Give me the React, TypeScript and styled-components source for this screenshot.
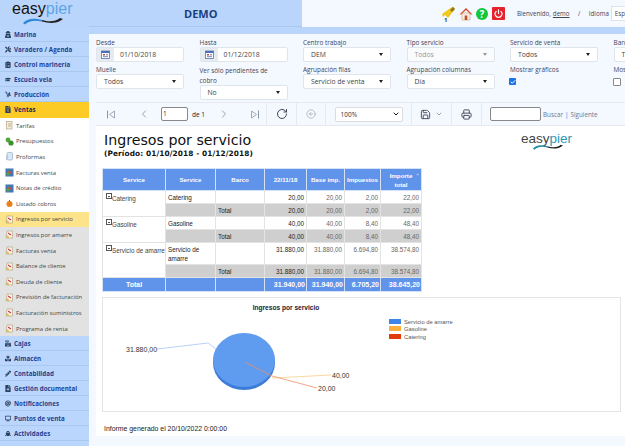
import React from "react";
import styled, { createGlobalStyle } from "styled-components";
import { ChevronLeft, ChevronRight, RotateCw, ArrowLeftCircle, Save, ChevronDown, Printer, Power, Check } from "lucide-react";
import {
  FaUserSecret,
  FaTools,
  FaClipboardList,
  FaGraduationCap,
  FaDolly,
  FaFileInvoiceDollar,
  FaCashRegister,
  FaBoxes,
  FaPencilAlt,
  FaFileAlt,
  FaAt,
  FaDesktop,
  FaShip,
} from "react-icons/fa";

const GlobalStyle = createGlobalStyle`
  html, body {
    margin: 0;
    padding: 0;
    width: 625px;
    height: 446px;
    overflow: hidden;
    background: #f4f8ff;
    font-family: "Open Sans", "Liberation Sans", sans-serif;
  }
`;

const Page = styled.div`
  width: 625px;
  height: 446px;
  display: flex;
  overflow: hidden;
`;

const Sidebar = styled.div`
  width: 89px;
  flex: none;
  display: flex;
  flex-direction: column;
  overflow: hidden;
  height: 446px;
  background: #fff;
`;

const LogoBox = styled.div`
  height: 27px;
  flex: none;
  background: #b9d5fb;
  position: relative;
`;

const LogoText = styled.div`
  font-family: "Liberation Sans", sans-serif;
  font-size: 16px;
  line-height: 18px;
  color: #111;
  padding-left: 12px;
`;

const LogoLight = styled.span<{ $tone?: string }>`
  color: ${(p) => p.$tone || "#5aa5e8"};
`;

const Swoosh = styled.div`
  position: absolute;
  left: 22px;
  top: 17px;
`;

const Heading = styled.div<{ $active?: boolean }>`
  height: 15px;
  flex: none;
  box-sizing: border-box;
  padding-left: 5px;
  display: flex;
  align-items: center;
  gap: 3px;
  font-size: 6.2px;
  font-weight: 700;
  letter-spacing: 0.05px;
  white-space: nowrap;
  color: ${(p) => (p.$active ? "#1c2a50" : "#1f3f8f")};
  background: ${(p) => (p.$active ? "#fccb25" : "#bad6fc")};
  border-bottom: 1px solid ${(p) => (p.$active ? "#fccb25" : "#a9c8ef")};
  svg {
    width: 6px;
    height: 7px;
    flex: none;
    color: #2a3f5f;
  }
`;

const VentasHeading = styled(Heading)`
  height: 16px;
`;

const SubItem = styled.div<{ $tone?: "plain" | "grey" | "current" }>`
  height: 15.6px;
  flex: none;
  padding-left: 5px;
  display: flex;
  align-items: center;
  gap: 2px;
  font-size: 5.9px;
  white-space: nowrap;
  color: #444;
  background: ${(p) =>
    p.$tone === "current" ? "#fde38a" : p.$tone === "grey" ? "#e2e2e2" : "#fff"};
`;

const Main = styled.div`
  flex: 1;
  min-width: 0;
  display: flex;
  flex-direction: column;
`;

const TopBar = styled.div`
  height: 27px;
  flex: none;
  display: flex;
`;

const TitleBlock = styled.div`
  width: 213px;
  flex: none;
  background: #b9d5fb;
  border-bottom: 1px solid #a9c8ef;
  box-sizing: border-box;
  display: flex;
  align-items: center;
  padding-left: 95px;
  font-size: 11px;
  font-weight: 700;
  color: #1a3f80;
`;

const UserBlock = styled.div`
  flex: 1;
  background: #f4f8ff;
  display: flex;
  align-items: center;
  padding-left: 139px;
  font-size: 6.2px;
  color: #445;
  white-space: nowrap;
`;

const TopIcon = styled.span`
  display: flex;
  margin-right: 3px;
`;

const HelpBadge = styled.span`
  width: 12px;
  height: 12px;
  border-radius: 50%;
  background: #10c83a;
  color: #fff;
  font-size: 10px;
  font-weight: 700;
  display: flex;
  align-items: center;
  justify-content: center;
  margin-right: 4px;
`;

const PowerBadge = styled.span`
  width: 13px;
  height: 13px;
  background: #e8222c;
  color: #fff;
  border-radius: 1px;
  display: flex;
  align-items: center;
  justify-content: center;
  margin-right: 12px;
`;

const UserName = styled.span`
  text-decoration: underline;
  margin-left: 2px;
`;

const Slash = styled.span`
  margin: 0 8.5px;
`;

const LangBox = styled.span`
  margin-left: 2px;
  background: #fff;
  border: 1px solid #dde3ea;
  padding: 2px 3px;
  width: 30px;
`;

const Band = styled.div`
  height: 7px;
  flex: none;
  background: #b9d5fb;
`;

const Filters = styled.div`
  height: 68px;
  flex: none;
  padding: 5px 0 0 7px;
  box-sizing: border-box;
  overflow: hidden;
  display: grid;
  grid-template-columns: repeat(6, 88px);
  grid-auto-rows: min-content;
  column-gap: 15.5px;
  row-gap: 4px;
  width: 640px;
`;

const Field = styled.div`
  display: flex;
  flex-direction: column;
  width: 88px;
  font-size: 6.4px;
  color: #445;
`;

const FieldLabel = styled.label`
  line-height: 8px;
  white-space: nowrap;
`;

const WrapLabel = styled(FieldLabel)`
  white-space: normal;
  width: 74px;
  line-height: 10px;
  margin-bottom: -1px;
`;

const Control = styled.div<{ $disabled?: boolean }>`
  height: 15px;
  box-sizing: border-box;
  background: ${(p) => (p.$disabled ? "#fafbfd" : "#fff")};
  border: 1px solid #dfe5ec;
  border-radius: 2px;
  display: flex;
  align-items: center;
  justify-content: space-between;
  padding: 0 7px;
  font-size: 6.8px;
  white-space: nowrap;
  color: ${(p) => (p.$disabled ? "#999" : "#444")};
`;

const Caret = styled.span<{ $disabled?: boolean }>`
  width: 0;
  height: 0;
  flex: none;
  border-left: 2.5px solid transparent;
  border-right: 2.5px solid transparent;
  border-top: 3px solid ${(p) => (p.$disabled ? "#999" : "#222")};
`;

const DateControl = styled(Control)`
  justify-content: flex-start;
  padding: 0;
`;

const DateAddon = styled.span`
  width: 17px;
  height: 100%;
  background: #e7ebf0;
  display: flex;
  align-items: center;
  justify-content: center;
  margin-right: 6px;
`;

const CheckOn = styled.span`
  width: 7px;
  height: 7px;
  margin: 4px 0 0 -1px;
  background: #1a73e8;
  border-radius: 1px;
  color: #fff;
  display: flex;
  align-items: center;
  justify-content: center;
`;

const CheckOff = styled.span`
  width: 6px;
  height: 6px;
  margin: 4px 0 0 -1px;
  background: #fff;
  border: 1px solid #888;
  border-radius: 1px;
`;

const Toolbar = styled.div`
  height: 24px;
  flex: none;
  margin-left: 7px;
  display: flex;
  align-items: stretch;
  border-top: 1px solid #e6eaf0;
  border-bottom: 1px solid #e6eaf0;
  box-sizing: border-box;
  color: #778;
`;

const ToolGroup = styled.div<{ $width: number }>`
  width: ${(p) => p.$width}px;
  flex: none;
  box-sizing: border-box;
  border-right: 1px solid #e6eaf0;
  display: flex;
  align-items: center;
  justify-content: center;
  gap: 4px;
  font-size: 6.3px;
`;

const PagerGroup = styled(ToolGroup)`
  justify-content: flex-start;
  padding-left: 11px;
  gap: 0;
`;

const SearchGroup = styled(ToolGroup)`
  justify-content: flex-start;
  padding-left: 8px;
  gap: 2px;
  border-right: none;
`;

const PagerStep = styled.span<{ $gap: number }>`
  display: flex;
  margin-right: ${(p) => p.$gap}px;
`;

const PageInput = styled.span`
  width: 27px;
  height: 14px;
  box-sizing: border-box;
  border: 1px solid #888;
  border-radius: 2px;
  background: #fff;
  font-size: 6.5px;
  color: #333;
  padding-left: 1px;
  line-height: 12px;
  margin-right: 4px;
`;

const PagerText = styled.span`
  color: #222;
  margin-right: 13px;
  font-size: 6.5px;
`;

const ZoomBox = styled.div`
  width: 68px;
  height: 15px;
  box-sizing: border-box;
  background: #fff;
  border: 1px solid #ddd;
  border-radius: 2px;
  display: flex;
  align-items: center;
  justify-content: space-between;
  padding: 0 2px 0 5px;
  color: #333;
  font-size: 6.5px;
`;

const SearchInput = styled.span`
  width: 51px;
  height: 14px;
  box-sizing: border-box;
  background: #fff;
  border: 1px solid #888;
  border-radius: 2px;
`;

const SearchLinks = styled.span`
  color: #6a7a90;
  white-space: nowrap;
`;

const Sep = styled.span`
  color: #1a73e8;
  margin: 0 2px;
`;

const Report = styled.div`
  flex: 1;
  min-height: 0;
  background: #fff;
  margin: 0 0 10px 7px;
  padding: 5px 0 0 6px;
  display: flex;
  flex-direction: column;
  font-family: "Liberation Sans", sans-serif;
  overflow: hidden;
`;

const ReportHead = styled.div`
  display: flex;
  justify-content: space-between;
  height: 37px;
  flex: none;
`;

const TitleGroup = styled.div`
  margin-left: 2px;
`;

const ReportTitle = styled.div`
  font-family: "DejaVu Sans", sans-serif;
  font-size: 14.2px;
  line-height: 18px;
  color: #111;
`;

const Period = styled.div`
  font-family: "DejaVu Sans", sans-serif;
  font-size: 7.4px;
  font-weight: 700;
  line-height: 10px;
  letter-spacing: 0.1px;
  color: #111;
`;

const ReportLogo = styled.div`
  width: 54px;
  margin-right: 50px;
  position: relative;
  font-size: 13.5px;
  line-height: 15px;
  color: #444;
  white-space: nowrap;
`;

const ReportSwoosh = styled.div`
  position: absolute;
  left: 9px;
  top: 13px;
`;

const Table = styled.table`
  width: 319px;
  border-collapse: collapse;
  table-layout: fixed;
  font-size: 6.3px;
  color: #444;
  flex: none;
`;

const HeadCell = styled.th`
  background: #6093ea;
  color: #fff;
  font-size: 6.2px;
  font-weight: 700;
  height: 21px;
  padding: 0 1px;
  border: 1px solid #d5e2f5;
  line-height: 9px;
  position: relative;
`;

const Cell = styled.td<{ $num?: boolean; $grey?: boolean; $dark?: boolean; $group?: boolean }>`
  padding: 2px 2px 1px 2px;
  vertical-align: top;
  line-height: 9px;
  border: 1px solid #e3e3e3;
  border-top-color: ${(p) => (p.$group ? "#999" : "#e3e3e3")};
  text-align: ${(p) => (p.$num ? "right" : "left")};
  background: ${(p) => (p.$grey ? "#cfcfcf" : "#fff")};
  color: ${(p) => (p.$dark ? "#222" : "#666")};
`;

const NameCell = styled(Cell)`
  white-space: nowrap;
  color: #444;
`;

const TotalCell = styled.td<{ $num?: boolean }>`
  background: #6093ea;
  color: #fff;
  font-weight: 700;
  font-size: 7px;
  height: 13px;
  padding: 0 1px;
  white-space: nowrap;
  border: 1px solid #d5e2f5;
  text-align: ${(p) => (p.$num ? "right" : "center")};
`;

const Toggle = styled.span`
  display: inline-block;
  width: 4px;
  height: 4px;
  border: 1px solid #555;
  margin: 0 0 0 1px;
  vertical-align: 2px;
  position: relative;
  &::after {
    content: "";
    position: absolute;
    left: 1px;
    right: 1px;
    top: 1.5px;
    height: 1px;
    background: #555;
  }
`;

const ChartBox = styled.div`
  width: 519px;
  height: 115px;
  flex: none;
  margin-top: 5px;
  border: 1px solid #e5e5e5;
  box-sizing: border-box;
`;

const ChartSvg = styled.svg`
  display: block;
`;

const Generated = styled.div`
  font-size: 6.9px;
  line-height: 9px;
  color: #222;
  margin: 12px 0 0 2px;
`;

const Sort = styled.span`
  position: absolute;
  right: 2px;
  top: 1px;
  font-size: 5px;
  color: #dde;
`;

type GlyphKind = "report" | "tariff" | "money" | "page" | "invoice" | "coin";

function SubGlyph({ kind }: { kind: GlyphKind }) {
  return (
    <svg width="9" height="9" viewBox="0 0 9 9" style={{ flex: "none" }}>
      {kind === "report" && (
        <>
          <path d="M2 1 H7.5 V8 H1 Z" fill="#f8f4e6" stroke="#a89c78" strokeWidth="0.6" />
          <path d="M3 3 L6 5" stroke="#d8304a" strokeWidth="1.2" />
          <path d="M1 7 L3 5 L4 8 Z" fill="#e8b020" />
        </>
      )}
      {kind === "tariff" && (
        <>
          <rect x="1.5" y="0.5" width="5.5" height="7.5" fill="#f3ecd8" stroke="#a89c78" strokeWidth="0.6" />
          <path d="M3 3 H6 M3 5 H6" stroke="#b09a70" strokeWidth="0.7" />
        </>
      )}
      {kind === "money" && (
        <>
          <circle cx="3" cy="3" r="2.4" fill="#4fa83a" />
          <circle cx="6" cy="6" r="2.6" fill="#3c8f2c" />
        </>
      )}
      {kind === "page" && (
        <>
          <rect x="2" y="0.5" width="5.5" height="7.5" rx="1" fill="#dbe6f5" stroke="#8ca2c4" strokeWidth="0.6" />
          <path d="M1 3 H3 V8 H1 Z" fill="#b8cae4" />
        </>
      )}
      {kind === "invoice" && (
        <>
          <rect x="0.5" y="0.5" width="8" height="8" fill="#3f7ab0" />
          <path d="M2 7 L4 2 L7 5 Z" fill="#d84a3a" />
          <rect x="1.5" y="4.5" width="3" height="3" fill="#5a9a5a" />
        </>
      )}
      {kind === "coin" && (
        <>
          <circle cx="4.5" cy="5" r="3" fill="#ee7f16" />
          <rect x="4" y="1" width="1" height="1.5" fill="#a85a10" />
        </>
      )}
    </svg>
  );
}

function PagerEdge({ flip }: { flip?: boolean }) {
  return (
    <svg width="8" height="9" viewBox="0 0 8 9" style={{ transform: flip ? "scaleX(-1)" : undefined }}>
      <path d="M0.5 0.5 V8.5" stroke="#8a94a6" strokeWidth="1" />
      <path d="M7.5 1 L2.5 4.5 L7.5 8 Z" fill="none" stroke="#8a94a6" strokeWidth="0.8" />
    </svg>
  );
}

function CalendarGlyph() {
  return (
    <svg width="9" height="9" viewBox="0 0 9 9">
      <rect x="0.5" y="1" width="8" height="7.5" fill="#fff" stroke="#5577b0" strokeWidth="0.8" />
      <rect x="0.5" y="1" width="8" height="2" fill="#4a70b8" />
      <rect x="2" y="4" width="2" height="1.5" fill="#c05050" />
      <rect x="5" y="4" width="2" height="1.5" fill="#88a0c8" />
      <rect x="2" y="6" width="5" height="1.2" fill="#88a0c8" />
    </svg>
  );
}

function LogoSwoosh({ width, height, tone }: { width: number; height: number; tone: string }) {
  return (
    <svg width={width} height={height} viewBox="0 0 42 8" style={{ display: "block" }}>
      <path d="M1 6 C6 1 12 1 20 3 L20 4.5 C13 3 7 3.5 3 7.5 Z" fill={tone} />
      <path d="M20 3 C27 5 33 5 38 1 L41 2 L38 4 C32 7 26 6 20 4.5 Z" fill="#222" />
    </svg>
  );
}

const upper: [React.ElementType, string][] = [
  [FaUserSecret, "Marina"],
  [FaTools, "Varadero / Agenda"],
  [FaClipboardList, "Control marinería"],
  [FaGraduationCap, "Escuela vela"],
  [FaDolly, "Producción"],
];

const ventas: [string, GlyphKind][] = [
  ["Tarifas", "tariff"],
  ["Presupuestos", "money"],
  ["Proformas", "page"],
  ["Facturas venta", "invoice"],
  ["Notas de crédito", "invoice"],
  ["Listado cobros", "coin"],
];

const informes = [
  "Ingresos por amarre",
  "Facturas venta",
  "Balance de cliente",
  "Deuda de cliente",
  "Previsión de facturación",
  "Facturación suministros",
  "Programa de renta",
];

const lower: [React.ElementType, string][] = [
  [FaCashRegister, "Cajas"],
  [FaBoxes, "Almacén"],
  [FaPencilAlt, "Contabilidad"],
  [FaFileAlt, "Gestión documental"],
  [FaAt, "Notificaciones"],
  [FaDesktop, "Puntos de venta"],
  [FaShip, "Actividades"],
];

const rows = [
  { name: "Catering", sub: "Catering", v: ["20,00", "20,00", "2,00", "22,00"] },
  { name: "Gasoline", sub: "Gasoline", v: ["40,00", "40,00", "8,40", "48,40"] },
  { name: "Servicio de amarre", sub: "Servicio de amarre", v: ["31.880,00", "31.880,00", "6.694,80", "38.574,80"] },
];

function App() {
  return (
    <Page>
      <GlobalStyle />
      <Sidebar>
        <LogoBox>
          <LogoText>
            easy<LogoLight>pier</LogoLight>
          </LogoText>
          <Swoosh>
            <LogoSwoosh width={42} height={8} tone="#2f86d8" />
          </Swoosh>
        </LogoBox>
        {upper.map(([Icon, label]) => (
          <Heading key={label}>
            <Icon />
            {label}
          </Heading>
        ))}
        <VentasHeading $active>
          <FaFileInvoiceDollar />
          Ventas
        </VentasHeading>
        {ventas.map(([label, kind]) => (
          <SubItem key={label}>
            <SubGlyph kind={kind} />
            {label}
          </SubItem>
        ))}
        <SubItem $tone="current">
          <SubGlyph kind="report" />
          Ingresos por servicio
        </SubItem>
        {informes.map((label) => (
          <SubItem key={label} $tone="grey">
            <SubGlyph kind="report" />
            {label}
          </SubItem>
        ))}
        {lower.map(([Icon, label]) => (
          <Heading key={label}>
            <Icon />
            {label}
          </Heading>
        ))}
        <Heading />
      </Sidebar>
      <Main>
        <TopBar>
          <TitleBlock>DEMO</TitleBlock>
          <UserBlock>
            <TopIcon>
              <svg width="15" height="16" viewBox="0 0 15 16">
                <path d="M1 8 L8 3 L12 0.5 L14 3 L11 7 L7 12 L4 9 L2 11 Z" fill="#f2c81e" />
                <path d="M9 4 L12 1 L14 3 L11 6 Z" fill="#8a7a20" />
                <text x="3" y="15.5" fontSize="6" fontWeight="700" fill="#345">1</text>
              </svg>
            </TopIcon>
            <TopIcon>
              <svg width="14" height="14" viewBox="0 0 14 14">
                <path d="M3 6 H11 V13 H3 Z" fill="#fbeee0" stroke="#c8a080" strokeWidth="0.6" />
                <path d="M0.5 7.5 L7 1 L13.5 7.5 L12 7.5 L7 3 L2 7.5 Z" fill="#cf4a28" />
                <rect x="5.7" y="8.5" width="2.6" height="4.5" fill="#b8502e" />
              </svg>
            </TopIcon>
            <HelpBadge>?</HelpBadge>
            <PowerBadge>
              <Power size={9} strokeWidth={3} />
            </PowerBadge>
            Bienvenido,
            <UserName>demo</UserName>
            <Slash>/</Slash>
            Idioma
            <LangBox>Esp</LangBox>
          </UserBlock>
        </TopBar>
        <Band />
        <Filters>
          <Field>
            <FieldLabel>Desde</FieldLabel>
            <DateControl>
              <DateAddon>
                <CalendarGlyph />
              </DateAddon>
              01/10/2018
            </DateControl>
          </Field>
          <Field>
            <FieldLabel>Hasta</FieldLabel>
            <DateControl>
              <DateAddon>
                <CalendarGlyph />
              </DateAddon>
              01/12/2018
            </DateControl>
          </Field>
          <Field>
            <FieldLabel>Centro trabajo</FieldLabel>
            <Control>
              DEM
              <Caret />
            </Control>
          </Field>
          <Field>
            <FieldLabel>Tipo servicio</FieldLabel>
            <Control $disabled>
              Todos
              <Caret $disabled />
            </Control>
          </Field>
          <Field>
            <FieldLabel>Servicio de venta</FieldLabel>
            <Control>
              Todos
              <Caret />
            </Control>
          </Field>
          <Field>
            <FieldLabel>Barco</FieldLabel>
            <Control>
              Todos
              <Caret />
            </Control>
          </Field>
          <Field>
            <FieldLabel>Muelle</FieldLabel>
            <Control>
              Todos
              <Caret />
            </Control>
          </Field>
          <Field>
            <WrapLabel>Ver sólo pendientes de cobro</WrapLabel>
            <Control>
              No
              <Caret />
            </Control>
          </Field>
          <Field>
            <FieldLabel>Agrupación filas</FieldLabel>
            <Control>
              Servicio de venta
              <Caret />
            </Control>
          </Field>
          <Field>
            <FieldLabel>Agrupación columnas</FieldLabel>
            <Control>
              Día
              <Caret />
            </Control>
          </Field>
          <Field>
            <FieldLabel>Mostrar gráficos</FieldLabel>
            <CheckOn>
              <Check size={6} strokeWidth={4} />
            </CheckOn>
          </Field>
          <Field>
            <FieldLabel>Mostrar</FieldLabel>
            <CheckOff />
          </Field>
        </Filters>
        <Toolbar>
          <PagerGroup $width={171}>
            <PagerStep $gap={23}>
              <PagerEdge />
            </PagerStep>
            <PagerStep $gap={11}>
              <ChevronLeft size={12} strokeWidth={1.4} />
            </PagerStep>
            <PageInput>1</PageInput>
            <PagerText>de 1</PagerText>
            <PagerStep $gap={21}>
              <ChevronRight size={12} strokeWidth={1.4} />
            </PagerStep>
            <PagerEdge flip />
          </PagerGroup>
          <ToolGroup $width={30}>
            <RotateCw size={12} color="#445" />
          </ToolGroup>
          <ToolGroup $width={29}>
            <ArrowLeftCircle size={10} strokeWidth={1.4} color="#999" />
          </ToolGroup>
          <ToolGroup $width={86}>
            <ZoomBox>
              100%
              <ChevronDown size={8} strokeWidth={3} color="#111" />
            </ZoomBox>
          </ToolGroup>
          <ToolGroup $width={40}>
            <Save size={11} color="#445" />
            <ChevronDown size={8} />
          </ToolGroup>
          <ToolGroup $width={30}>
            <Printer size={11} color="#445" />
          </ToolGroup>
          <SearchGroup $width={135}>
            <SearchInput />
            <SearchLinks>
              Buscar<Sep>|</Sep>Siguiente
            </SearchLinks>
          </SearchGroup>
        </Toolbar>
        <Report>
          <ReportHead>
            <TitleGroup>
              <ReportTitle>Ingresos por servicio</ReportTitle>
              <Period>(Período: 01/10/2018 - 01/12/2018)</Period>
            </TitleGroup>
            <ReportLogo>
              easy<LogoLight $tone="#2a9ab8">pier</LogoLight>
              <ReportSwoosh>
                <LogoSwoosh width={36} height={6} tone="#1c8aa8" />
              </ReportSwoosh>
            </ReportLogo>
          </ReportHead>
          <Table>
            <colgroup>
              <col style={{ width: 63 }} />
              <col style={{ width: 50 }} />
              <col style={{ width: 49 }} />
              <col style={{ width: 42 }} />
              <col style={{ width: 38 }} />
              <col style={{ width: 36 }} />
              <col style={{ width: 41 }} />
            </colgroup>
            <thead>
              <tr>
                <HeadCell>Service</HeadCell>
                <HeadCell>Service</HeadCell>
                <HeadCell>Barco</HeadCell>
                <HeadCell>22/11/18</HeadCell>
                <HeadCell>Base imp.</HeadCell>
                <HeadCell>Impuestos</HeadCell>
                <HeadCell>
                  Importe
                  <br />
                  total
                  <Sort>÷</Sort>
                </HeadCell>
              </tr>
            </thead>
            <tbody>
              {rows.map((r) => (
                <React.Fragment key={r.name}>
                  <tr>
                    <NameCell rowSpan={2} $group>
                      <Toggle />
                      {r.name}
                    </NameCell>
                    <Cell $group $dark>
                      {r.sub}
                    </Cell>
                    <Cell />
                    {r.v.map((x, i) => (
                      <Cell key={i} $num $dark={i === 0}>
                        {x}
                      </Cell>
                    ))}
                  </tr>
                  <tr>
                    <Cell $grey />
                    <Cell $grey $dark>
                      Total
                    </Cell>
                    {r.v.map((x, i) => (
                      <Cell key={i} $num $grey $dark={i === 0}>
                        {x}
                      </Cell>
                    ))}
                  </tr>
                </React.Fragment>
              ))}
              <tr>
                <TotalCell>Total</TotalCell>
                <TotalCell />
                <TotalCell />
                <TotalCell $num>31.940,00</TotalCell>
                <TotalCell $num>31.940,00</TotalCell>
                <TotalCell $num>6.705,20</TotalCell>
                <TotalCell $num>38.645,20</TotalCell>
              </tr>
            </tbody>
          </Table>
          <ChartBox>
            <ChartSvg width="517" height="113" viewBox="0 0 517 113">
              <text x="183" y="12" textAnchor="middle" fontSize="6.6" fontWeight="700" fill="#223">
                Ingresos por servicio
              </text>
              <ellipse cx="141" cy="65" rx="31" ry="27" fill="#3d7bd8" />
              <ellipse cx="141" cy="62" rx="31" ry="27" fill="#5f9bef" />
              <path d="M54 51 L105 45 L113 51" fill="none" stroke="#b8d4fa" strokeWidth="1" />
              <path d="M169 80 L228 77" fill="none" stroke="#fbd9a0" strokeWidth="1" />
              <path d="M142 64 L169 78 L214 90" fill="none" stroke="#ee8f66" strokeWidth="0.8" />
              <text x="23" y="54" fontSize="7" fill="#333">31.880,00</text>
              <text x="229" y="80" fontSize="7" fill="#333">40,00</text>
              <text x="215" y="93" fontSize="7" fill="#333">20,00</text>
              <rect x="286" y="21" width="12" height="5" fill="#3d85e8" />
              <rect x="286" y="28" width="12" height="5" fill="#fbb040" />
              <rect x="286" y="36" width="12" height="5" fill="#e03c0c" />
              <text x="301" y="26" fontSize="5.8" fill="#555">Servicio de amarre</text>
              <text x="301" y="33" fontSize="5.8" fill="#555">Gasoline</text>
              <text x="301" y="41" fontSize="5.8" fill="#555">Catering</text>
            </ChartSvg>
          </ChartBox>
          <Generated>Informe generado el 20/10/2022 0:00:00</Generated>
        </Report>
      </Main>
    </Page>
  );
}

export default App;
